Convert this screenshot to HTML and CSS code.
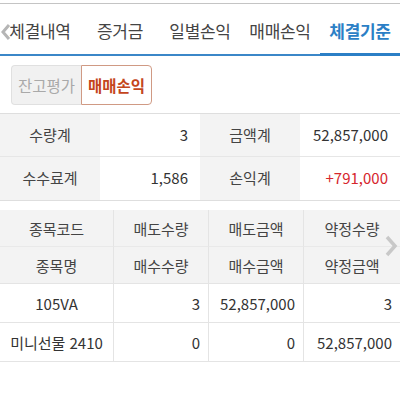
FILE: index.html
```html
<!DOCTYPE html>
<html lang="ko">
<head>
<meta charset="utf-8">
<link rel="stylesheet" href="styles.css">
</head>
<body>
<div class="page">
  <nav class="tabs">
    <svg class="tab-prev" width="10" height="18" viewBox="0 0 10 18"><path d="M8 2 L2 9 L8 16" fill="none" stroke="#b5b5b5" stroke-width="3"/></svg>
    <div class="tab">체결내역</div>
    <div class="tab">증거금</div>
    <div class="tab">일별손익</div>
    <div class="tab">매매손익</div>
    <div class="tab active">체결기준</div>
  </nav>
  <div class="seg-wrap">
    <div class="seg">
      <div class="seg-btn">잔고평가</div>
      <div class="seg-btn on">매매손익</div>
    </div>
  </div>
  <div class="summary">
    <div class="lbl">수량계</div><div class="val">3</div>
    <div class="lbl">금액계</div><div class="val">52,857,000</div>
    <div class="lbl">수수료계</div><div class="val">1,586</div>
    <div class="lbl">손익계</div><div class="val red">+791,000</div>
  </div>
  <div class="detail">
    <div class="grid head">
      <div class="c">종목코드</div><div class="c">매도수량</div><div class="c">매도금액</div><div class="c">약정수량</div>
      <div class="c">종목명</div><div class="c">매수수량</div><div class="c">매수금액</div><div class="c">약정금액</div>
    </div>
    <div class="grid body">
      <div class="c">105VA</div><div class="c r">3</div><div class="c r">52,857,000</div><div class="c r">3</div>
      <div class="c">미니선물 2410</div><div class="c r">0</div><div class="c r">0</div><div class="c r">52,857,000</div>
    </div>
    <svg class="next" width="14" height="22" viewBox="0 0 14 22"><path d="M3 2 L11 11 L3 20" fill="none" stroke="#c8c8c8" stroke-width="3.5"/></svg>
  </div>
</div>
</body>
</html>
```
FILE: styles.css
```css
* { box-sizing: border-box; }
html, body { margin: 0; padding: 0; background: #fff; }
body {
  font-family: "Noto Sans CJK KR", "Noto Sans", sans-serif;
  color: #333;
  width: 400px;
  height: 400px;
  overflow: hidden;
}
.page { padding-top: 3px; }
.tabs {
  position: relative;
  display: flex;
  border-top: 1px solid #c4c4c4;
  border-bottom: 2px solid #3b87c8;
  height: 53px;
}
.tab {
  flex: 1;
  text-align: center;
  font-size: 17px;
  line-height: 50px;
  padding-top: 2px;
  color: #444;
  letter-spacing: -0.3px;
}
.tab.active {
  color: #2b7fc6;
  font-weight: 700;
  border-bottom: 3px solid #2b7fc6;
  margin-bottom: -2px;
}
.tab-prev { position: absolute; left: 1px; top: 19px; }
.seg-wrap {
  padding: 9px 11px 8px;
  border-bottom: 1px solid #dedede;
}
.seg {
  display: inline-flex;
  height: 40px;
  border-radius: 4px;
}
.seg-btn {
  width: 70px;
  font-size: 15.5px;
  line-height: 38px;
  text-align: center;
  background: #f1f1f1;
  color: #a9a9a9;
  border: 1px solid #e0e0e0;
  border-radius: 4px 0 0 4px;
  border-right: none;
}
.seg-btn.on {
  width: 71px;
  background: #fff;
  color: #c4461c;
  font-weight: 700;
  border: 1px solid #d09a84;
  border-radius: 0 4px 4px 0;
}
.summary {
  display: grid;
  grid-template-columns: 100px 100px 100px 100px;
  grid-auto-rows: 43px;
  border-bottom: 1px solid #dedede;
}
.summary > div {
  font-size: 15px;
  line-height: 42px;
  border-bottom: 1px solid #e6e6e6;
}
.summary > div:nth-last-child(-n+4) { border-bottom: none; }
.summary .lbl { background: #f3f3f3; text-align: center; color: #444; }
.summary .val { text-align: right; padding-right: 12px; color: #333; }
.summary .red { color: #d6262d; }
.detail {
  position: relative;
  margin-top: 9px;
}
.grid {
  display: grid;
  grid-template-columns: 114px 95px 95px 96px;
}
.grid .c {
  font-size: 15px;
  text-align: center;
  border-right: 1px solid #e4e4e4;
  border-bottom: 1px solid #e4e4e4;
}
.grid .c:nth-child(4n) { border-right: none; }
.head { background: #f3f3f3; }
.head .c { height: 37px; line-height: 37px; color: #444; }
.head .c:nth-child(-n+4) { border-bottom: 1px solid #e9e9e9; }
.body .c { height: 39px; line-height: 39px; color: #333; }
.body .c.r { text-align: right; padding-right: 8px; }
.next { position: absolute; right: 2px; top: 25px; }
```
